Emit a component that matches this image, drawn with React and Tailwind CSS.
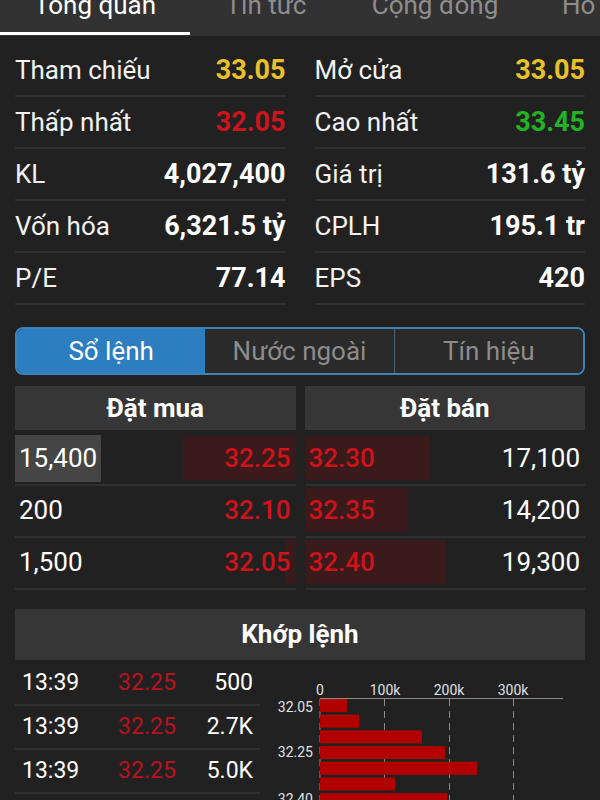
const tabs = [
  ["Tổng quan", "w-[190px]"],
  ["Tin tức", "w-[152px]"],
  ["Cộng đồng", "w-[186px]"],
  ["Hồ sơ", "w-[136px]"],
];

const stats = [
  ["Tham chiếu", "33.05", "text-[#e8c12a]", "Mở cửa", "33.05", "text-[#e8c12a]"],
  ["Thấp nhất", "32.05", "text-[#cc141c]", "Cao nhất", "33.45", "text-[#22b325]"],
  ["KL", "4,027,400", "text-white", "Giá trị", "131.6 tỷ", "text-white"],
  ["Vốn hóa", "6,321.5 tỷ", "text-white", "CPLH", "195.1 tr", "text-white"],
  ["P/E", "77.14", "text-white", "EPS", "420", "text-white"],
];

const book = [
  { bq: "15,400", bp: "32.25", bw: 113, sp: "32.30", sq: "17,100", sw: 125, hl: true },
  { bq: "200", bp: "32.10", bw: 0, sp: "32.35", sq: "14,200", sw: 103 },
  { bq: "1,500", bp: "32.05", bw: 11, sp: "32.40", sq: "19,300", sw: 141 },
];

const trades = [
  ["13:39", "32.25", "500"],
  ["13:39", "32.25", "2.7K"],
  ["13:39", "32.25", "5.0K"],
];

const bars = [27, 39, 102, 125, 157, 75, 127];

function VolumeChart() {
  return (
    <svg width="325" height="140" className="block">
      {[
        ["0", 60],
        ["100k", 125],
        ["200k", 189],
        ["300k", 253],
      ].map(([t, x]) => (
        <text key={t} x={x} y="33" textAnchor="middle" fontSize="14" fill="#e0e0e0" fontFamily="Roboto">
          {t}
        </text>
      ))}
      <line x1="60" y1="36.5" x2="303" y2="36.5" stroke="#8a8a8a" strokeWidth="1" />
      {[60, 124.5, 189.5, 253.5].map((x) => (
        <line
          key={x}
          x1={x}
          y1="37"
          x2={x}
          y2="140"
          stroke="#8a8a8a"
          strokeWidth="1"
          strokeDasharray="7 5"
        />
      ))}
      {bars.map((w, i) => (
        <rect key={i} x="60" y={37 + i * 15.7} width={w} height="13" fill="#b20000" />
      ))}
      {[
        ["32.05", 50],
        ["32.25", 95],
        ["32.40", 142],
      ].map(([t, y]) => (
        <text key={t} x="53" y={y} textAnchor="end" fontSize="14" fill="#e0e0e0" fontFamily="Roboto">
          {t}
        </text>
      ))}
    </svg>
  );
}

export default function App() {
  return (
    <div className="h-[800px] w-[600px] overflow-hidden bg-[#212121] font-['Roboto','Liberation_Sans',sans-serif] text-white">
      {/* top tabs, scrolled partly out of view */}
      <div className="flex h-[36px] overflow-hidden bg-[#323232]">
        {tabs.map(([t, w], i) => (
          <div
            key={t}
            className={`relative shrink-0 text-center text-[26px] leading-[26px] ${w} ${
              i === 0 ? "text-white" : "text-[#8e8e8e]"
            }`}
          >
            <div className="-mt-[8px] whitespace-nowrap">{t}</div>
            {i === 0 && <div className="absolute bottom-[1px] left-0 right-0 h-[3px] bg-white" />}
          </div>
        ))}
      </div>

      {/* overview stats */}
      <div className="grid grid-cols-2 gap-x-[29px] px-[15px] pt-[9px]">
        {stats.map((r) => (
          <div key={r[0]} className="contents">
            <div className="flex h-[52px] items-center justify-between border-b-2 border-[#303030]">
              <span className="text-[26px] text-[#f2f2f2]">{r[0]}</span>
              <span className={`text-[27px] font-bold ${r[2]}`}>{r[1]}</span>
            </div>
            <div className="flex h-[52px] items-center justify-between border-b-2 border-[#303030]">
              <span className="text-[26px] text-[#f2f2f2]">{r[3]}</span>
              <span className={`text-[27px] font-bold ${r[5]}`}>{r[4]}</span>
            </div>
          </div>
        ))}
      </div>

      {/* segmented control */}
      <div className="mx-[15px] mt-[22px] flex h-[48px] overflow-hidden rounded-[8px] border-2 border-[#3f82b8] text-[26px]">
        <div className="flex flex-1 items-center justify-center bg-[#2c7ec0] text-white">Sổ lệnh</div>
        <div className="flex flex-1 items-center justify-center border-r border-[#4d6070] bg-[#2a2a2a] text-[#8c8c8c]">
          Nước ngoài
        </div>
        <div className="flex flex-1 items-center justify-center bg-[#2a2a2a] text-[#8c8c8c]">Tín hiệu</div>
      </div>

      {/* order book */}
      <div className="mt-[11px] grid grid-cols-2 gap-x-[9px] px-[15px]">
        <div className="flex h-[44px] items-center justify-center bg-[#363636] text-[26px] font-bold">Đặt mua</div>
        <div className="flex h-[44px] items-center justify-center bg-[#363636] text-[26px] font-bold">Đặt bán</div>
      </div>
      <div className="mt-[4px] grid grid-cols-2 gap-x-[9px] px-[15px]">
        {book.map((r) => (
          <div key={r.bp} className="contents">
            <div className="relative flex h-[52px] items-center justify-between border-b-2 border-[#303030] pb-[2px] text-[26px]">
              <div
                className="absolute bottom-[4px] right-0 top-[2px] bg-[#3a1a1a]"
                style={{ width: r.bw }}
              />
              <span className={`relative px-[4px] py-[4px] ${r.hl ? "bg-[#454545]" : ""}`}>{r.bq}</span>
              <span className="relative pr-[5px] font-medium text-[#d0121b]">{r.bp}</span>
            </div>
            <div className="relative flex h-[52px] items-center justify-between border-b-2 border-[#303030] pb-[2px] text-[26px]">
              <div
                className="absolute bottom-[4px] left-0 top-[2px] bg-[#3a1a1a]"
                style={{ width: r.sw }}
              />
              <span className="relative pl-[4px] font-medium text-[#d0121b]">{r.sp}</span>
              <span className="relative pr-[5px]">{r.sq}</span>
            </div>
          </div>
        ))}
      </div>

      {/* matched orders */}
      <div className="mx-[15px] mt-[19px] flex h-[51px] items-center justify-center bg-[#363636] text-[26px] font-bold">
        Khớp lệnh
      </div>
      <div className="mt-[2px] flex px-[15px]">
        <div className="w-[245px]">
          {trades.map((t, i) => (
            <div
              key={i}
              className="flex h-[44px] items-center border-b-2 border-[#303030] px-[7px] text-[23px]"
            >
              <span className="w-[88px]">{t[0]}</span>
              <span className="w-[74px] text-center text-[#b8121e]">{t[1]}</span>
              <span className="flex-1 text-right">{t[2]}</span>
            </div>
          ))}
        </div>
        <VolumeChart />
      </div>
    </div>
  );
}
